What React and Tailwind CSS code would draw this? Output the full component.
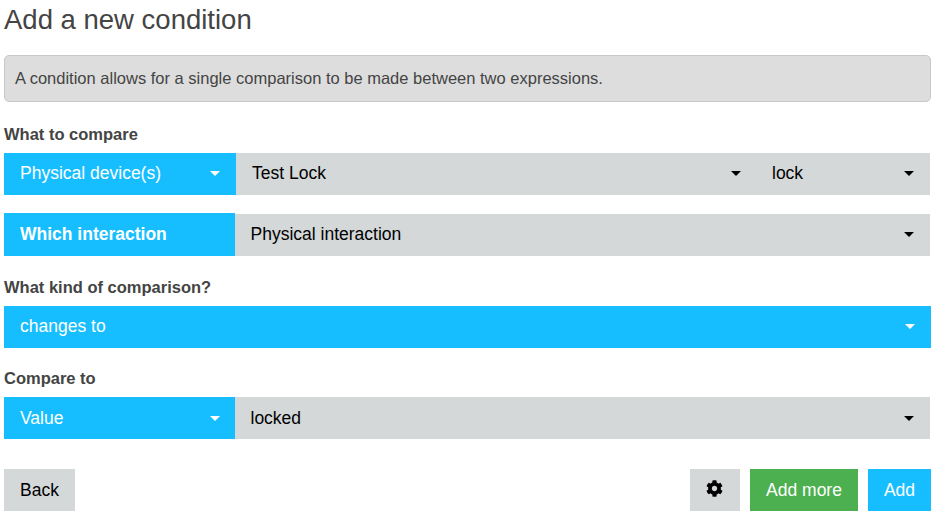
// src/components/ConditionEditor.jsx
import { FaCog } from "react-icons/fa";

function Caret() {
    return (
        <svg className="mt-[18px] shrink-0 self-start" width="10" height="5" viewBox="0 0 10 5" fill="currentColor">
            <path d="M0 0h10L5 5z" />
        </svg>
    );
}

function Dropdown({ label, className = "" }) {
    return (
        <button type="button" className={`flex h-[42px] items-center justify-between text-left ${className}`}>
            <span className="-mt-0.5 leading-[26px]">{label}</span>
            <Caret />
        </button>
    );
}

export default function App() {
    return (
        <div className="h-[522px] w-[932px] overflow-hidden bg-white pl-1 pr-px font-['Liberation_Sans',Arial,sans-serif] text-[17.5px] text-black">
            <h1 className="h-[55px] text-[27.5px] leading-[39px] text-[#444]">Add a new condition</h1>

            <div className="flex h-[47px] items-center rounded-[5px] border border-[#c8c8c8] bg-[#ddd] px-[10px] text-[16.5px] text-[#444]">
                A condition allows for a single comparison to be made between two expressions.
            </div>

            <h2 className="h-[51px] pt-5 text-[16.5px] font-bold leading-6 text-[#444]">What to compare</h2>
            <div className="mr-px flex">
                <Dropdown label="Physical device(s)" className="w-[232px] bg-[#17beff] pl-4 pr-4 text-white" />
                <Dropdown label="Test Lock" className="w-[520px] bg-[#d4d8d9] pl-4 pr-[15px]" />
                <Dropdown label="lock" className="flex-1 bg-[#d4d8d9] pl-4 pr-4" />
            </div>

            <div className="mr-px mt-[18px] flex items-end">
                <div className="flex h-[43px] w-[231px] items-center bg-[#17beff] px-4 font-bold text-white">
                    Which interaction
                </div>
                <Dropdown label="Physical interaction" className="flex-1 bg-[#d4d8d9] pl-[15.5px] pr-4" />
            </div>

            <h2 className="h-[50px] pt-[19px] text-[16.5px] font-bold leading-6 text-[#444]">What kind of comparison?</h2>
            <Dropdown label="changes to" className="w-full bg-[#17beff] pl-4 pr-4 text-white" />

            <h2 className="h-[49px] pt-[18px] text-[16.5px] font-bold leading-6 text-[#444]">Compare to</h2>
            <div className="mr-px flex">
                <Dropdown label="Value" className="w-[231px] bg-[#17beff] pl-4 pr-[15px] pt-px text-white" />
                <Dropdown label="locked" className="flex-1 bg-[#d4d8d9] pl-[15.5px] pr-4 pt-px" />
            </div>

            <div className="mt-[30px] flex gap-[10px]">
                <button type="button" className="mr-auto h-[42px] w-[71px] bg-[#d4d8d9]">Back</button>
                <button type="button" aria-label="Settings" className="flex h-[42px] w-[50px] items-center bg-[#d4d8d9] pl-4">
                    <FaCog size={17} className="-mt-[3px]" />
                </button>
                <button type="button" className="h-[42px] w-[108px] bg-[#4caf50] text-white">Add more</button>
                <button type="button" className="h-[42px] w-[63px] bg-[#17beff] text-white">Add</button>
            </div>
        </div>
    );
}
